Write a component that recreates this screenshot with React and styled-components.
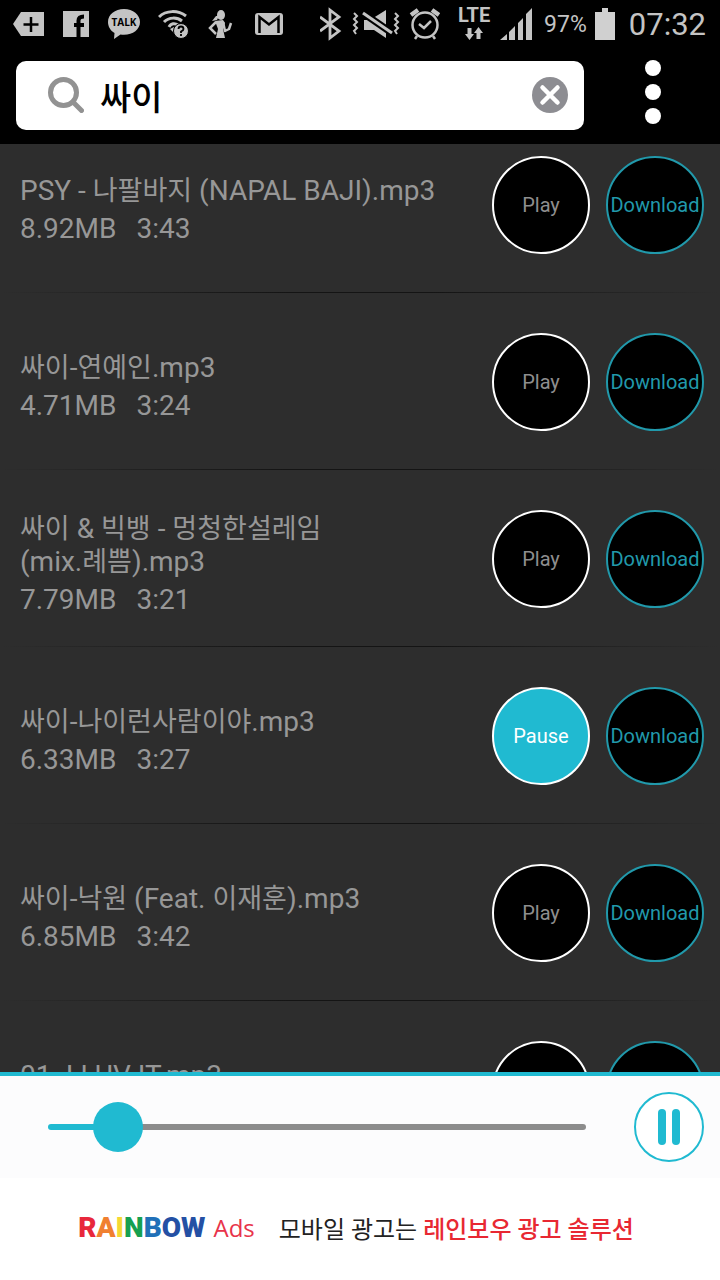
import { useLayoutEffect, useRef, useState } from 'react';
import styled, { createGlobalStyle } from 'styled-components';

const ACCENT = '#20bad1';
const DURATION = 207;

const songs = [
    { id: 1, title: 'PSY - 나팔바지 (NAPAL BAJI).mp3', size: '8.92MB', time: '3:43' },
    { id: 2, title: '싸이-연예인.mp3', size: '4.71MB', time: '3:24' },
    { id: 3, title: '싸이 & 빅뱅 - 멍청한설레임 (mix.례쁨).mp3', size: '7.79MB', time: '3:21' },
    { id: 4, title: '싸이-나이런사람이야.mp3', size: '6.33MB', time: '3:27' },
    { id: 5, title: '싸이-낙원 (Feat. 이재훈).mp3', size: '6.85MB', time: '3:42' },
    { id: 6, title: '01. I LUV IT.mp3', size: '7.12MB', time: '3:09' },
];

export default function App() {
    const [query, setQuery] = useState('싸이');
    const [playing, setPlaying] = useState(4);
    const [position, setPosition] = useState(19);
    const listRef = useRef(null);

    // the list opens slightly scrolled
    useLayoutEffect(() => {
        listRef.current.scrollTop = 28;
    }, []);

    return (
        <>
            <GlobalStyle />
            <Page>
                <StatusBar />

                <Header>
                    <SearchBox>
                        <SearchIcon />
                        <input
                            type="text"
                            aria-label="Search"
                            value={query}
                            onChange={(e) => setQuery(e.target.value)}
                        />
                        <ClearButton type="button" aria-label="Clear" onClick={() => setQuery('')}>
                            <svg width="36" height="36" viewBox="0 0 36 36">
                                <circle cx="18" cy="18" r="18" fill="#8d8d92" />
                                <path d="M10.5 10.5L25.5 25.5M25.5 10.5L10.5 25.5" stroke="#fff" strokeWidth="4.5" strokeLinecap="round" />
                            </svg>
                        </ClearButton>
                    </SearchBox>
                    <MenuButton type="button" aria-label="Menu">
                        <span />
                        <span />
                        <span />
                    </MenuButton>
                </Header>

                <SongList ref={listRef}>
                    {songs.map((song) => (
                        <SongRow key={song.id}>
                            <SongInfo>
                                <h2><Title text={song.title} /></h2>
                                <p>
                                    <span>{song.size}</span>
                                    <span>{song.time}</span>
                                </p>
                            </SongInfo>
                            <RoundButton
                                type="button"
                                $active={playing === song.id}
                                onClick={() => setPlaying(playing === song.id ? null : song.id)}
                            >
                                {playing === song.id ? 'Pause' : 'Play'}
                            </RoundButton>
                            <RoundButton type="button" $download>Download</RoundButton>
                        </SongRow>
                    ))}
                </SongList>

                <Player>
                    <Slider
                        type="range"
                        aria-label="Position"
                        min="0"
                        max={DURATION}
                        value={position}
                        onChange={(e) => setPosition(Number(e.target.value))}
                        style={{ '--fill': `${(position / DURATION) * 100}%` }}
                    />
                    <PauseButton type="button" aria-label="Pause">
                        <span />
                        <span />
                    </PauseButton>
                </Player>

                <AdBanner href="#">
                    <RainbowLogo />
                    <AdName>Ads</AdName>
                    <AdText>모바일 광고는 <strong>레인보우 광고 솔루션</strong></AdText>
                </AdBanner>
            </Page>
        </>
    );
}

// breaks only at spaces, hangul is set a bit smaller than latin
function Title({ text }) {
    return text.split(/( )/).map((word, i) => (
        word === ' ' ? ' ' : (
            <Word key={i}>
                {word.split(/([가-힣]+)/).map((part, j) => (
                    /[가-힣]/.test(part) ? <Hangul key={j}>{part}</Hangul> : part
                ))}
            </Word>
        )
    ));
}

function StatusBar() {
    return (
        <StyledStatusBar>
            <StatusGroup $gap="17px">
                <svg width="32" height="32" viewBox="0 0 32 32">
                    <path d="M0 16L8 4H31V28H8Z" fill="#c4c4c4" />
                    <path d="M18 9V24M10.5 16.5H25.5" stroke="#000" strokeWidth="2.5" />
                </svg>
                <svg width="28" height="32" viewBox="0 0 28 32">
                    <path d="M1 3H27V29H1Z" fill="#c4c4c4" />
                    <path d="M16.5 29V12.5Q16.5 8.5 22 8.5M12 17H22" fill="none" stroke="#000" strokeWidth="4" />
                </svg>
                <svg width="34" height="34" viewBox="0 0 34 34">
                    <path d="M17 2C8 2 1 7.5 1 15c0 4.7 2.5 8.6 6.5 11L7 32l6.5-4.5c1 .2 2.3.3 3.5.3 9 0 16-5.5 16-12.8S26 2 17 2Z" fill="#c4c4c4" />
                    <text x="17" y="19" textAnchor="middle" fontFamily="Open Sans, sans-serif" fontSize="10" fontWeight="700" fill="#000">TALK</text>
                </svg>
                <svg width="32" height="32" viewBox="0 0 32 32">
                    <g fill="none" stroke="#c4c4c4" strokeWidth="3">
                        <path d="M1 9C8 2 20 2 28 8" />
                        <path d="M6 14C11 9 19 9 24 13" />
                        <path d="M11 19C13 15 17 15 20 17" />
                    </g>
                    <path d="M12 21L16 19V25Z" fill="#c4c4c4" />
                    <circle cx="23" cy="23" r="7.5" fill="#c4c4c4" stroke="#000" strokeWidth="1" />
                    <path d="M20.5 21Q20.5 18.5 23 18.5T25.5 21Q25.5 22.5 23 23.5V25M23 26V28" fill="none" stroke="#000" strokeWidth="1.8" />
                </svg>
                <svg width="30" height="32" viewBox="0 0 30 32">
                    <ellipse cx="14" cy="7" rx="4" ry="5" fill="#c4c4c4" />
                    <path d="M5 13L9 8L12 8L10 12Z" fill="#c4c4c4" />
                    <path d="M8 13L16 12L18 15L16 21L18 30H9L11 21Z" fill="#c4c4c4" />
                    <path d="M9 14L3 20L9 26" fill="none" stroke="#c4c4c4" strokeWidth="2.5" />
                    <path d="M16 14L18 23L22 21L24 15" fill="none" stroke="#c4c4c4" strokeWidth="2.5" strokeLinejoin="round" />
                </svg>
                <svg width="30" height="32" viewBox="0 0 30 32">
                    <rect x="1" y="5" width="28" height="22" rx="3" fill="#c4c4c4" />
                    <path d="M5.5 25V9L15 16.5L24.5 9V25" fill="none" stroke="#000" strokeWidth="2.5" />
                </svg>
            </StatusGroup>

            <StatusGroup $gap="8px">
                <svg width="24" height="34" viewBox="0 0 24 34">
                    <path d="M0 10L19 24L10 31V3L19 10L0 24" fill="none" stroke="#c4c4c4" strokeWidth="2.8" />
                </svg>
                <svg width="48" height="32" viewBox="0 0 48 32">
                    <path d="M12 12H18L34 2V30L22 22H12Z" fill="#c4c4c4" />
                    <path d="M11 5L40 25" stroke="#000" strokeWidth="7" />
                    <path d="M11 5L40 25" stroke="#c4c4c4" strokeWidth="3" />
                    <path d="M2 5L5 8L2 11L5 14L2 17L5 20L2 23L4 26M43 5L46 8L43 11L46 14L43 17L46 20L43 23L45 26" fill="none" stroke="#c4c4c4" strokeWidth="2" />
                </svg>
                <svg width="32" height="34" viewBox="0 0 32 34">
                    <circle cx="17" cy="18" r="12.5" fill="none" stroke="#c4c4c4" strokeWidth="2.5" />
                    <path d="M11 17L16 21L23 14" fill="none" stroke="#c4c4c4" strokeWidth="2.5" />
                    <path d="M3 8L10 3M31 8L24 3" stroke="#c4c4c4" strokeWidth="4.5" />
                    <path d="M9 29L7 32M25 29L27 32" stroke="#c4c4c4" strokeWidth="2.5" />
                </svg>
                <Network>
                    <span>LTE</span>
                    <svg width="18" height="14" viewBox="0 0 18 14">
                        <path d="M2.5 1H6.5V7H9L4.500 13L0 7H2.5ZM11.5 12H15.5V6H18L13.500 0L9 6H11.5Z" fill="#c4c4c4" />
                    </svg>
                </Network>
                <svg width="32" height="32" viewBox="0 0 32 32">
                    <path d="M0 32L7 26V32ZM9 32V24L15 18V32ZM18 32V15L23 10V32ZM26 32V6L32 0V32Z" fill="#c4c4c4" />
                </svg>
                <Battery>97%</Battery>
                <svg width="20" height="32" viewBox="0 0 20 32">
                    <path d="M7 0H13V4H20V32H0V4H7Z" fill="#d0d0d0" />
                </svg>
                <Clock>07:32</Clock>
            </StatusGroup>
        </StyledStatusBar>
    );
}

function SearchIcon() {
    return (
        <svg width="36" height="36" viewBox="0 0 36 36" fill="none" stroke="#929292">
            <circle cx="15.5" cy="15.5" r="13" strokeWidth="5" />
            <path d="M25 25L33.5 33.5" strokeWidth="5" strokeLinecap="round" />
        </svg>
    );
}

function RainbowLogo() {
    return (
        <RainbowWord>
            <span>R</span>
            <span>A</span>
            <span>I</span>
            <span>N</span>
            <span>B</span>
            <span>O</span>
            <span>W</span>
        </RainbowWord>
    );
}


const GlobalStyle = createGlobalStyle`
    * {
        box-sizing: border-box;
    }

    body {
        margin: 0;
        background-color: #000;
        font-family: Roboto, "Noto Sans CJK KR", sans-serif;
    }

    button {
        padding: 0;
        border: none;
        background: none;
        font-family: inherit;
        cursor: pointer;
    }

    svg {
        display: block;
        flex-shrink: 0;
    }
`;

const Page = styled.div`
    height: 100vh;
    display: flex;
    flex-direction: column;
    word-break: keep-all;
`;

const StyledStatusBar = styled.div`
    height: 48px;
    padding: 0 14px 0 13px;
    background-color: #000;
    color: #c4c4c4;

    display: flex;
    flex-shrink: 0;
    align-items: center;
    justify-content: space-between;
`;

const StatusGroup = styled.div`
    display: flex;
    align-items: center;
    gap: ${({ $gap }) => $gap};
`;

const Network = styled.div`
    width: 36px;
    margin-left: 8px;
    display: flex;
    flex-direction: column;
    align-items: center;
    gap: 3px;

    span {
        font-size: 20px;
        line-height: 17px;
        font-weight: 700;
    }
`;

const Battery = styled.span`
    margin-left: 4px;
    font-size: 23px;
`;

const Clock = styled.span`
    margin-left: 6px;
    font-size: 31px;
`;

const Header = styled.header`
    height: 96px;
    padding: 0 16px 2px;
    background-color: #000;

    display: flex;
    flex-shrink: 0;
    align-items: center;
`;

const SearchBox = styled.div`
    height: 69px;
    min-width: 0;
    padding: 0 16px 0 32px;
    background-color: #fff;
    border-radius: 10px;

    display: flex;
    flex: 1;
    align-items: center;
    gap: 16px;

    input {
        min-width: 0;
        padding: 0;
        border: none;
        outline: none;
        background: none;
        color: #000;
        font-family: inherit;
        font-size: 34px;
        font-weight: 500;
        flex: 1;
    }
`;

const ClearButton = styled.button`
    width: 36px;
    height: 36px;
    flex-shrink: 0;
`;

const MenuButton = styled.button`
    width: 120px;
    padding: 0 0 6px 18px;

    display: flex;
    flex-direction: column;
    flex-shrink: 0;
    align-items: center;
    gap: 8px;

    span {
        width: 16px;
        height: 16px;
        border-radius: 50%;
        background-color: #fff;
    }
`;

const SongList = styled.ul`
    margin: 0;
    padding: 0;
    list-style: none;
    background-color: #2d2d2d;
    overflow-y: auto;
    scrollbar-width: none;
    flex: 1;
    min-height: 0;
`;

const SongRow = styled.li`
    height: 177px;
    padding: 0 16px 0 20px;
    background: linear-gradient(to right, transparent, #141414 40%, #141414 60%, transparent) bottom / 100% 1px no-repeat;

    display: flex;
    align-items: center;
    gap: 16px;
`;

const SongInfo = styled.div`
    padding-top: 10px;
    color: #979797;
    font-size: 28px;
    line-height: 33px;
    flex: 1;

    h2 {
        margin: 0 0 5px;
        font-size: inherit;
        font-weight: 400;
    }

    p {
        margin: 0;
        display: flex;
        gap: 20px;
    }
`;

const Word = styled.span`
    white-space: nowrap;
`;

const Hangul = styled.span`
    font-family: "Noto Sans CJK KR", sans-serif;
    font-size: 27px;
    line-height: 1;
`;

const RoundButton = styled.button`
    width: 98px;
    height: 98px;
    border: 2px solid ${({ $download }) => ($download ? '#2199ab' : '#fff')};
    border-radius: 50%;
    background-color: ${({ $active }) => ($active ? ACCENT : '#000')};
    color: ${({ $active, $download }) => ($active ? '#fff' : $download ? '#2199ab' : '#8e8e8e')};
    font-size: 20px;

    display: flex;
    flex-shrink: 0;
    align-items: center;
    justify-content: center;
`;

const Player = styled.section`
    height: 106px;
    padding: 0 16px 0 48px;
    border-top: 4px solid ${ACCENT};
    background-color: #fcfcfd;

    display: flex;
    flex-shrink: 0;
    align-items: center;
    gap: 48px;
`;

const Slider = styled.input`
    height: 50px;
    margin: 0;
    min-width: 0;
    appearance: none;
    background: none;
    flex: 1;

    &::-webkit-slider-runnable-track {
        height: 6px;
        border-radius: 3px;
        background: linear-gradient(to right, ${ACCENT} var(--fill), #8c8c8c var(--fill));
    }

    &::-webkit-slider-thumb {
        width: 50px;
        height: 50px;
        margin-top: -22px;
        appearance: none;
        border-radius: 50%;
        background-color: ${ACCENT};
    }
`;

const PauseButton = styled.button`
    width: 70px;
    height: 70px;
    border: 2px solid ${ACCENT};
    border-radius: 50%;
    background-color: #fff;

    display: flex;
    flex-shrink: 0;
    align-items: center;
    justify-content: center;
    gap: 6px;

    span {
        width: 8px;
        height: 36px;
        border-radius: 4px;
        background-color: ${ACCENT};
    }
`;

const AdBanner = styled.a`
    height: 102px;
    padding: 0 8px 4px 0;
    background-color: #fff;
    text-decoration: none;

    display: flex;
    flex-shrink: 0;
    align-items: center;
    justify-content: center;
`;

const RainbowWord = styled.span`
    font-size: 28px;
    font-weight: 900;
    color: #2450a4;

    span:nth-child(1) {
        color: #e8283c;
    }

    span:nth-child(2) {
        color: #f08030;
    }

    span:nth-child(3) {
        color: #f5d832;
    }

    span:nth-child(4) {
        color: #16a050;
    }

    span:nth-child(5) {
        color: #2070b8;
    }
`;

const AdName = styled.span`
    margin: 0 24px 0 8px;
    color: #e8334a;
    font-family: "Open Sans", sans-serif;
    font-size: 24px;
`;

const AdText = styled.span`
    color: #222;
    font-size: 24px;

    strong {
        color: #e82832;
        font-weight: 500;
    }
`;
